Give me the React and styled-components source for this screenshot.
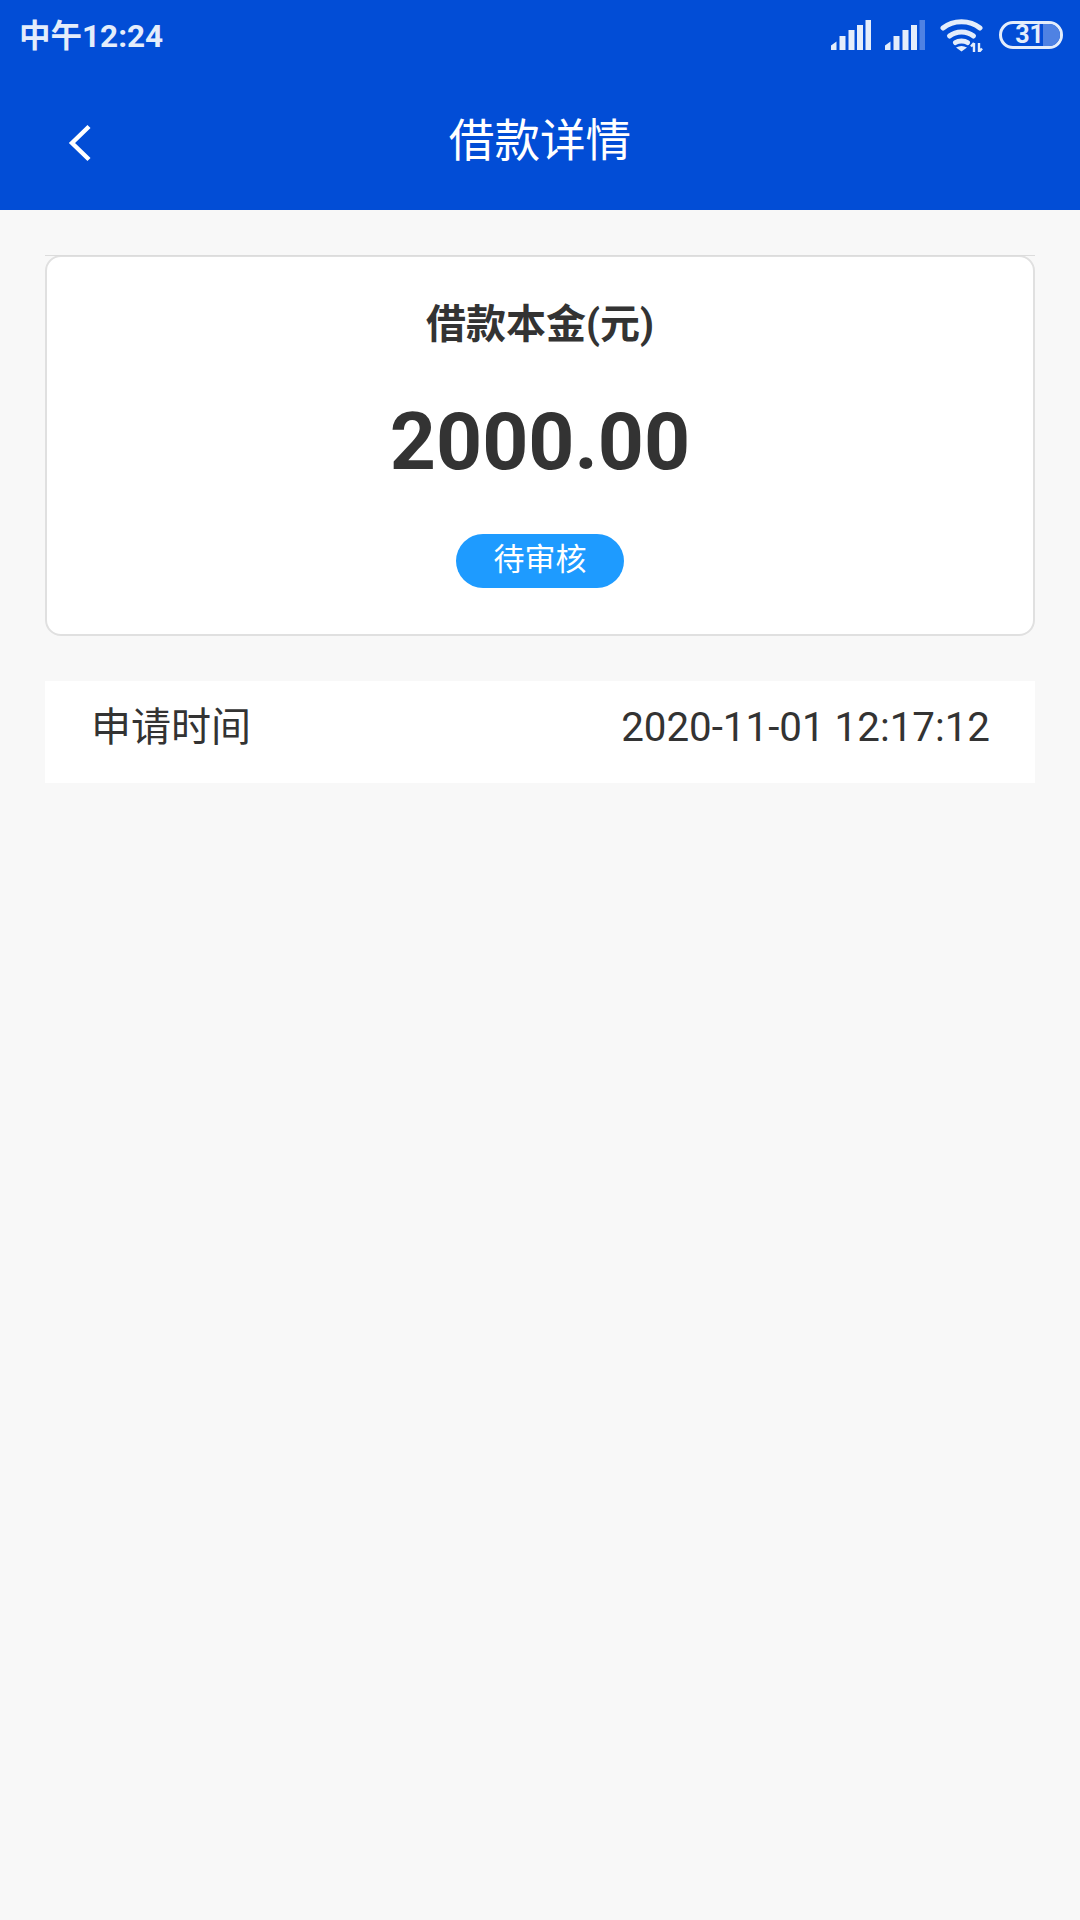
import React from "react";
import styled, { createGlobalStyle } from "styled-components";

const Global = createGlobalStyle`
  html, body { margin: 0; padding: 0; background: #f8f8f8; }
  body { font-family: Roboto, "Noto Sans CJK SC", sans-serif; }
  * { box-sizing: border-box; }
`;

const Page = styled.div`
  width: 1080px;
  height: 1920px;
  background: #f8f8f8;
  display: flex;
  flex-direction: column;
`;

const Header = styled.header`
  height: 210px;
  background: #024dd6;
  display: flex;
  flex-direction: column;
`;

const StatusBar = styled.div`
  height: 74px;
  display: flex;
  align-items: center;
  justify-content: space-between;
  padding: 0 17px 0 19px;
`;

const Clock = styled.span`
  font-size: 31.5px;
  font-weight: 700;
  color: #e4edfb;
  line-height: 1;
`;

const StatusIcons = styled.div`
  display: flex;
  align-items: center;
  height: 32px;
  margin-bottom: 4px;
`;

const NavBar = styled.div`
  position: relative;
  height: 136px;
  display: flex;
  align-items: flex-start;
  justify-content: center;
`;

const BackButton = styled.div`
  position: absolute;
  left: 67px;
  top: 50px;
  width: 26px;
  height: 38px;
`;

const Title = styled.h1`
  margin: 36px 0 0;
  font-size: 45.6px;
  line-height: 64px;
  font-weight: 400;
  color: #fff;
`;

const Content = styled.main`
  padding: 45px 45px 0;
  display: flex;
  flex-direction: column;
`;

const Card = styled.section`
  position: relative;
  height: 381px;
  background: #fff;
  border: 2px solid #e0e0e0;
  border-radius: 16px;
  display: flex;
  flex-direction: column;
  align-items: center;

  &::before {
    content: "";
    position: absolute;
    top: -2px;
    left: -2px;
    right: -2px;
    height: 1px;
    background: #dcdcdc;
  }
`;

const CardLabel = styled.div`
  margin-top: 38px;
  font-size: 40px;
  line-height: 60px;
  font-weight: 700;
  color: #333;
`;

const Amount = styled.div`
  margin-top: 40px;
  font-size: 80.5px;
  line-height: 94px;
  font-weight: 700;
  color: #333;
`;

const Badge = styled.div`
  margin-top: 45px;
  width: 168px;
  height: 54px;
  border-radius: 27px;
  background: #1e9bff;
  color: #fff;
  font-size: 31px;
  line-height: 52px;
  text-align: center;
`;

const InfoRow = styled.div`
  margin-top: 45px;
  height: 102px;
  background: #fff;
  display: flex;
  justify-content: space-between;
  align-items: flex-start;
  padding: 19px 45px 0 46px;
  color: #333;
  font-size: 40px;
  line-height: 56px;
`;

const RowValue = styled.span`
  font-size: 40.3px;
`;

const Signal = ({ weak, ml }) => (
  <svg width="40" height="30" viewBox="0 0 40 30" style={{ marginLeft: ml }}>
    <path d="M0 30V25.5L5.5 21.5V30Z" fill="#e4edfb" />
    <rect x="8.5" y="16" width="6" height="14" fill="#e4edfb" />
    <rect x="17.5" y="10" width="6" height="20" fill="#e4edfb" />
    <rect x="26" y="5" width="6" height="25" fill="#e4edfb" />
    <rect x="34.5" y="0" width="5.5" height="30" fill={weak ? "#4f82e3" : "#e4edfb"} />
  </svg>
);

const Wifi = () => (
  <svg width="44" height="34" viewBox="0 0 44 34" style={{ marginLeft: 15 }}>
    <g fill="none" stroke="#e4edfb" strokeWidth="5" strokeLinecap="round">
      <path d="M3 10C13 1.5 30 1.5 40 10" />
      <path d="M9.5 18C16 12.5 27 12.5 33.5 18" />
      <path d="M15.5 24.5C18.5 22.5 24.5 22.5 27.5 24.5" />
    </g>
    <path d="M21.5 33.5L16 29.5Q21.5 26.5 27 29.5Z" fill="#e4edfb" />
    <path d="M34 34V25M34 25L31 28.5M39 25V34M39 34L42 30.5" fill="none" stroke="#e4edfb" strokeWidth="2.4" />
  </svg>
);

const BatteryIcon = styled.div`
  position: relative;
  margin-left: 15px;
  width: 64px;
  height: 28px;
  border: 3px solid #e4edfb;
  border-radius: 14px;
  overflow: hidden;
  display: flex;
  align-items: center;
  justify-content: center;
`;

const BatteryLevel = styled.span`
  position: absolute;
  top: 0;
  bottom: 0;
  left: 41px;
  right: 0;
  background: #4f82e3;
`;

const BatteryText = styled.span`
  position: relative;
  margin-left: -3px;
  font-size: 25px;
  font-weight: 700;
  color: #e4edfb;
  line-height: 22px;
`;

export default function App() {
  return (
    <Page>
      <Global />
      <Header>
        <StatusBar>
          <Clock>中午12:24</Clock>
          <StatusIcons>
            <Signal />
            <Signal weak ml={14} />
            <Wifi />
            <BatteryIcon>
              <BatteryLevel />
              <BatteryText>31</BatteryText>
            </BatteryIcon>
          </StatusIcons>
        </StatusBar>
        <NavBar>
          <BackButton>
            <svg width="26" height="38" viewBox="0 0 26 38">
              <path d="M22 2.5L5 19L22 35.5" fill="none" stroke="#fff" strokeWidth="4.4" />
            </svg>
          </BackButton>
          <Title>借款详情</Title>
        </NavBar>
      </Header>
      <Content>
        <Card>
          <CardLabel>借款本金(元)</CardLabel>
          <Amount>2000.00</Amount>
          <Badge>待审核</Badge>
        </Card>
        <InfoRow>
          <span>申请时间</span>
          <RowValue>2020-11-01 12:17:12</RowValue>
        </InfoRow>
      </Content>
    </Page>
  );
}
